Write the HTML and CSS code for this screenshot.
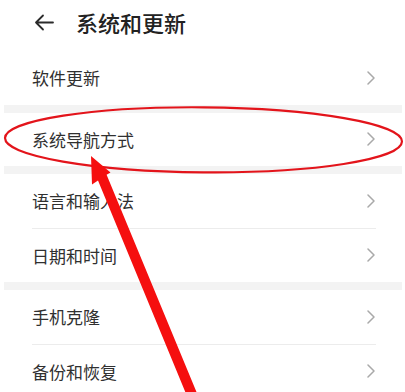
FILE: index.html
```html
<!DOCTYPE html>
<html lang="zh-CN">
<head>
<meta charset="utf-8">
<title>系统和更新</title>
<link rel="stylesheet" href="styles.css">
</head>
<body>
<div class="page">
  <header class="header">
    <svg class="back" width="20" height="17" viewBox="0 0 20 17" aria-hidden="true">
      <path d="M19 8.5H2M9 1.5L2 8.5L9 15.5" fill="none" stroke="#2b2b2b" stroke-width="1.8" stroke-linecap="round" stroke-linejoin="round"/>
    </svg>
    <h1 class="title">系统和更新</h1>
  </header>

  <section class="group">
    <div class="row"><span class="label">软件更新</span><svg class="chev" width="8" height="14" viewBox="0 0 8 14" aria-hidden="true"><path d="M1 1L7 7L1 13" fill="none" stroke="#a9a9a9" stroke-width="1.5" stroke-linecap="round" stroke-linejoin="round"/></svg></div>
  </section>
  <div class="band"></div>
  <section class="group">
    <div class="row"><span class="label">系统导航方式</span><svg class="chev" width="8" height="14" viewBox="0 0 8 14" aria-hidden="true"><path d="M1 1L7 7L1 13" fill="none" stroke="#a9a9a9" stroke-width="1.5" stroke-linecap="round" stroke-linejoin="round"/></svg></div>
  </section>
  <div class="band"></div>
  <section class="group">
    <div class="row divided"><span class="label">语言和输入法</span><svg class="chev" width="8" height="14" viewBox="0 0 8 14" aria-hidden="true"><path d="M1 1L7 7L1 13" fill="none" stroke="#a9a9a9" stroke-width="1.5" stroke-linecap="round" stroke-linejoin="round"/></svg></div>
    <div class="row"><span class="label">日期和时间</span><svg class="chev" width="8" height="14" viewBox="0 0 8 14" aria-hidden="true"><path d="M1 1L7 7L1 13" fill="none" stroke="#a9a9a9" stroke-width="1.5" stroke-linecap="round" stroke-linejoin="round"/></svg></div>
  </section>
  <div class="band"></div>
  <section class="group">
    <div class="row divided"><span class="label">手机克隆</span><svg class="chev" width="8" height="14" viewBox="0 0 8 14" aria-hidden="true"><path d="M1 1L7 7L1 13" fill="none" stroke="#a9a9a9" stroke-width="1.5" stroke-linecap="round" stroke-linejoin="round"/></svg></div>
    <div class="row"><span class="label">备份和恢复</span><svg class="chev" width="8" height="14" viewBox="0 0 8 14" aria-hidden="true"><path d="M1 1L7 7L1 13" fill="none" stroke="#a9a9a9" stroke-width="1.5" stroke-linecap="round" stroke-linejoin="round"/></svg></div>
  </section>

  <svg class="annot" width="405" height="392" viewBox="0 0 405 392" aria-hidden="true">
    <ellipse cx="203.5" cy="139.8" rx="198.5" ry="32.5" fill="none" stroke="#e3141b" stroke-width="2.2" transform="rotate(0.5 203.5 139.8)"/>
    <polygon points="91,156 110.5,172.5 106.6,174.8 199.8,400 188.6,400 98,180.5 92,184.5" fill="#f50f0f"/>
  </svg>
</div>
</body>
</html>
```

FILE: styles.css
```css
html, body {
  margin: 0;
  padding: 0;
  background: #ffffff;
}

body {
  font-family: "Noto Sans CJK SC", "Noto Sans", sans-serif;
  color: #2b2b2b;
  overflow: hidden;
}

.page {
  position: relative;
  width: 405px;
  height: 392px;
  overflow: hidden;
}

.header {
  height: 51px;
  display: flex;
  align-items: flex-start;
  padding: 0 0 0 34px;
  box-sizing: border-box;
}

.back {
  margin-top: 14px;
  flex: none;
}

.title {
  margin: 0 0 0 22px;
  font-size: 22px;
  font-weight: 500;
  line-height: 44px;
  color: #222222;
  letter-spacing: 0;
}

.group {
  display: flex;
  flex-direction: column;
}

.row {
  height: 53.5px;
  margin: 0 29px 0 32px;
  display: flex;
  align-items: center;
  justify-content: space-between;
}

.row.divided {
  border-bottom: 1px solid #ececec;
}

.label {
  font-size: 17px;
  line-height: 20px;
  color: #303030;
  padding-top: 1px;
}

.chev {
  flex: none;
  margin-right: 1px;
}

.band {
  height: 8px;
  margin: 0 3px 0 4px;
  background: #f3f3f3;
}

.annot {
  position: absolute;
  left: 0;
  top: 0;
  pointer-events: none;
}
```
